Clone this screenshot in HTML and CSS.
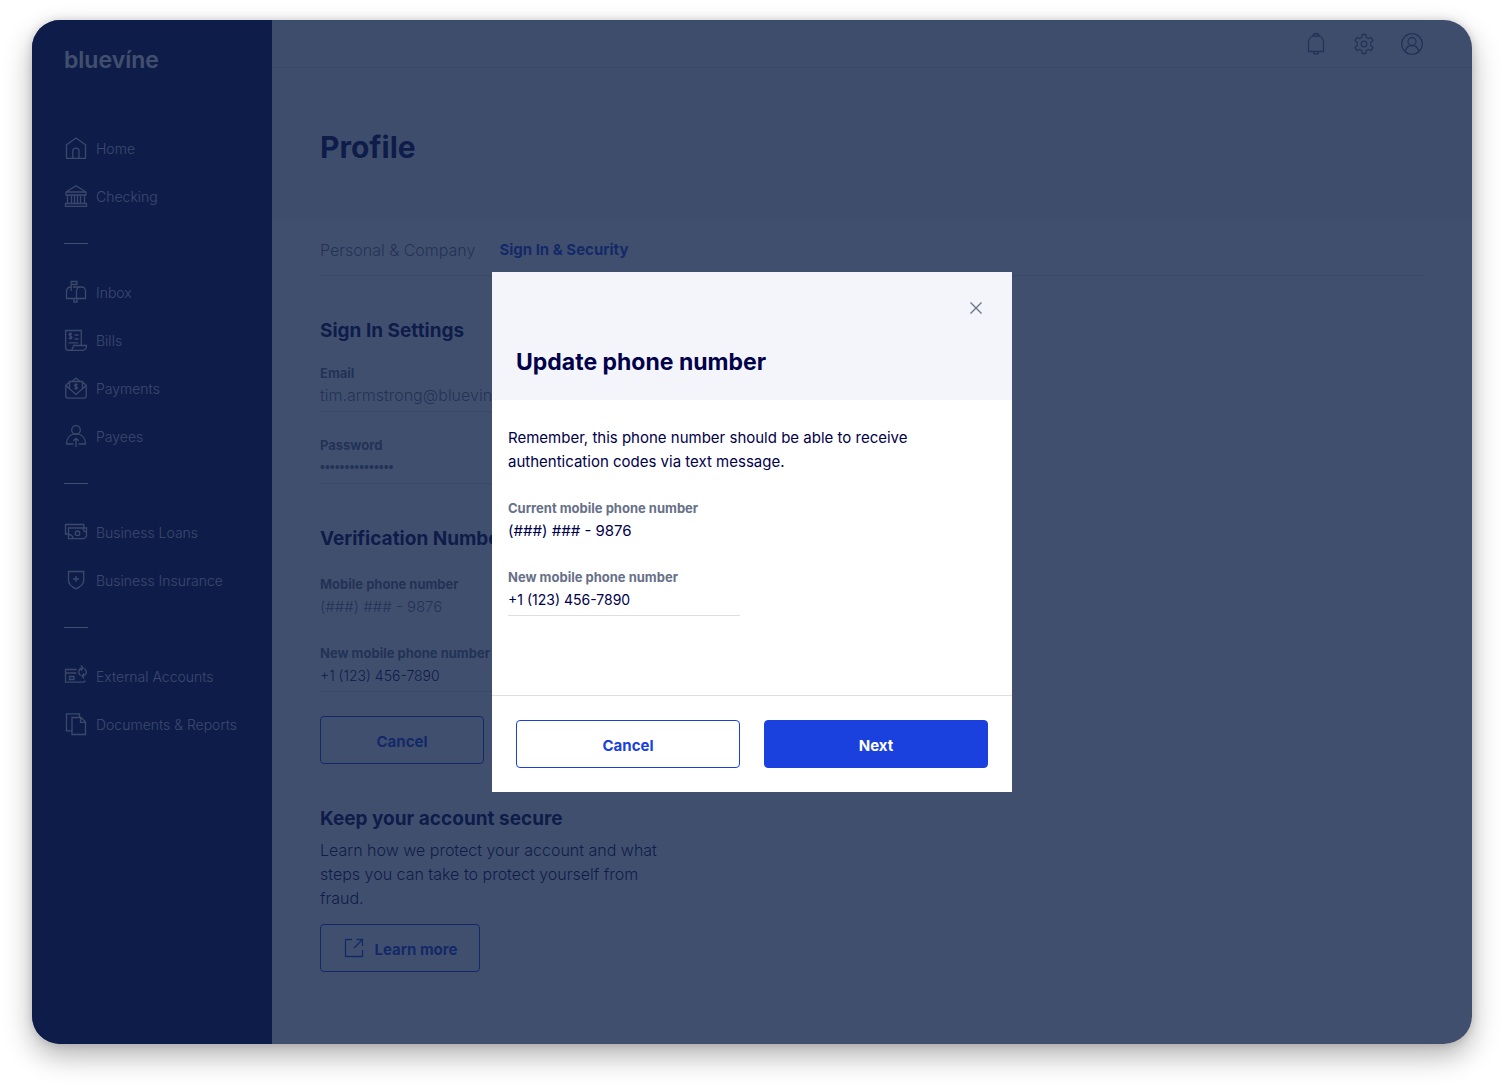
FILE: index.html
```
<!DOCTYPE html>
<html lang="en">
<head>
    <meta charset="UTF-8">
    <meta name="viewport" content="width=device-width, initial-scale=1.0">
    <title>Bluevine - Profile</title>
    <link rel="stylesheet" href="styles.css">
</head>
<body>
    <div class="window">
        <aside class="sidebar">
            <a class="logo" href="#">bluevíne</a>
            <nav class="nav">
                <a class="nav-item" href="#">
                    <svg class="icon" viewBox="0 0 24 24"><path d="M2.5 8.800 12 2l9.500 6.800V22.300h-19zM8.800 22V15.300a3.100 3.100 0 0 1 6.200 0V22"/></svg>
                    Home
                </a>
                <a class="nav-item" href="#">
                    <svg class="icon" viewBox="0 0 24 24"><path d="M2 8 12 1.800 22 8v3H2zM2 8h20M3.500 11v8.500M7.500 11v8.500M10.500 11v8.500M13.500 11v8.500M16.500 11v8.500M20.500 11v8.500M1.500 19.500h21v2.800h-21z"/></svg>
                    Checking
                </a>
                <hr class="nav-divider">
                <a class="nav-item" href="#">
                    <svg class="icon" viewBox="0 0 24 24"><path d="M7.200 11V1.500H13v3H7.200M7 7H6.500a4 4 0 0 0-4 4v7.500h19V11a4 4 0 0 0-4-4H9M12.500 18.500V11a4 4 0 0 1 4-4M10 18.500V22h3v-3.500"/></svg>
                    Inbox
                </a>
                <a class="nav-item" href="#">
                    <svg class="icon" viewBox="0 0 24 24"><path d="M17.300 17.500v-15H1.600v17a2.800 2.800 0 0 0 2.800 2.800H19q3.400-.5 3.500-4.800H9.500q-.5 4.800-4 4.800M4.500 14.800h9.800M10.500 7h4M10.500 11h4M8 6.200Q6.200 4.800 5 6.300c-.6 1.700 3 1.300 3 3.200-.5 1.500-2.200 1.300-3.300.2M6.500 4.500v7.300"/></svg>
                    Bills
                </a>
                <a class="nav-item" href="#">
                    <svg class="icon" viewBox="0 0 24 24"><path d="M5.500 6 1.800 9.200v10.500a2.500 2.500 0 0 0 2.500 2.500h15.400a2.500 2.500 0 0 0 2.500-2.500V9.200L18.500 6M5.500 13.500v-8h13v8M8 5.500 12 2l4 3.500M1.800 9.500 12 18.500l10.200-9M13.500 9.200q-1.500-1.300-2.700-.2c-.8 1.600 2.800 1.300 2.600 3-.5 1.300-2 1.100-3 .1M12 7.300v6.400"/></svg>
                    Payments
                </a>
                <a class="nav-item" href="#">
                    <svg class="icon" viewBox="0 0 24 24"><circle cx="12" cy="6" r="4.300"/><path d="M9.500 20h-7c0-5 2.500-8.500 6.500-10M14.500 20h7c0-5-2.500-8.500-6.500-10M9 10h6M12 23v-8.500M9.300 16.800l2.700-2.500 2.700 2.500"/></svg>
                    Payees
                </a>
                <hr class="nav-divider">
                <a class="nav-item" href="#">
                    <svg class="icon" viewBox="0 0 24 24"><path d="M4.500 14h-3V4.500h18.300V8M4.500 8h18v8.200l-2.500 2.500H4.500zM4.500 14.500q4 0 4.500 4M19 8q0 3.500 3.500 4"/><circle cx="13.500" cy="13.300" r="2.300"/></svg>
                    Business Loans
                </a>
                <a class="nav-item" href="#">
                    <svg class="icon" viewBox="0 0 24 24"><path d="M4.500 3.500h15.200V12c0 4-3 6.800-7.600 8.800C7.500 18.800 4.500 16 4.500 12zM12 8v6M9 11h6"/></svg>
                    Business Insurance
                </a>
                <hr class="nav-divider">
                <a class="nav-item" href="#">
                    <svg class="icon" viewBox="0 0 24 24"><path d="M12.500 5.500h-11v12.700h18.300l1.700-1.500M1.500 9h11M5.500 12.500H10v3H5.500zM16.500 11.500q-2-1.700-1.800-4Q15.200 4.500 18.500 4M17 1.500 19 4l-2 2.500M20.500 4.500q2 1.700 1.800 4-.5 3-3.800 3.500M20 9.500 18 12l2 2.500"/></svg>
                    External Accounts
                </a>
                <a class="nav-item" href="#">
                    <svg class="icon" viewBox="0 0 24 24"><path d="M8 18.800H2.500V1.800h13V5.500M8 5.500h9l4.500 4.500v12.500H8zM16.500 5.500V10.300h5"/></svg>
                    Documents &amp; Reports
                </a>
            </nav>
        </aside>

        <main class="main">
            <header class="topbar">
                <button class="icon-btn" type="button" aria-label="Notifications">
                    <svg class="icon" viewBox="0 0 24 24"><path d="M4.500 19.500V10q0-4 4.500-6h6q4.500 2 4.500 6v9.500zM9 4q0-2.500 3-2.500T15 4M9.500 19.500q0 2.700 2.500 2.700t2.500-2.700"/></svg>
                </button>
                <button class="icon-btn" type="button" aria-label="Settings">
                    <svg class="icon" viewBox="0 0 24 24"><circle cx="12" cy="12" r="2.800"/><path d="M10.200 2.500h3.600l.5 3 2 1.100 2.800-1.100 1.900 3.200-2.300 1.900v2.800l2.300 1.900-1.900 3.200-2.800-1.100-2 1.100-.5 3h-3.600l-.5-3-2-1.100-2.800 1.100L3 15.300l2.300-1.900v-2.800L3 8.700l1.900-3.200 2.800 1.100 2-1.100z"/></svg>
                </button>
                <button class="icon-btn" type="button" aria-label="Account">
                    <svg class="icon" viewBox="0 0 24 24"><circle cx="12" cy="12" r="10.300"/><circle cx="12" cy="9.500" r="4"/><path d="M5 19.500q1.500-6 7-6t7 6"/></svg>
                </button>
            </header>
            <div class="page-title">
                <h1>Profile</h1>
            </div>
            <div class="content">
                <nav class="tabs">
                    <a class="tab" href="#">Personal &amp; Company</a>
                    <a class="tab active" href="#">Sign In &amp; Security</a>
                </nav>

                <section class="section sign-in">
                    <h2>Sign In Settings</h2>
                    <div class="field">
                        <label for="email">Email</label>
                        <input class="muted" type="email" id="email" value="tim.armstrong@bluevine.com">
                    </div>
                    <div class="field">
                        <label for="password">Password</label>
                        <input class="muted" type="password" id="password" value="bluevinesecret1">
                    </div>
                </section>

                <section class="section verification">
                    <h2>Verification Number</h2>
                    <div class="field plain">
                        <label for="mobile">Mobile phone number</label>
                        <input class="muted" type="text" id="mobile" value="(###) ### - 9876" readonly>
                    </div>
                    <div class="field">
                        <label for="newMobile">New mobile phone number</label>
                        <input type="tel" id="newMobile" value="+1 (123) 456-7890">
                    </div>
                    <div class="section-buttons">
                        <button class="btn" type="button">Cancel</button>
                    </div>
                </section>

                <section class="section secure">
                    <h2>Keep your account secure</h2>
                    <p>Learn how we protect your account and what steps you can take to protect yourself from fraud.</p>
                    <button class="btn learn-btn" type="button">
                        <svg class="icon" viewBox="0 0 24 24"><path d="M9 3.500H2.500v17h17V14M13.500 3.500h6V10M19.500 3.500l-8.500 8.500"/></svg>
                        Learn more
                    </button>
                </section>
            </div>
        </main>

        <!-- Update phone modal -->
        <div class="overlay">
            <div class="modal" role="dialog" aria-labelledby="modalTitle">
                <div class="modal-header">
                    <button class="icon-btn close-btn" type="button" aria-label="Close">
                        <svg class="icon" viewBox="0 0 24 24"><path d="m6.500 6.500 11 11M17.500 6.500l-11 11"/></svg>
                    </button>
                    <h2 id="modalTitle">Update phone number</h2>
                </div>
                <div class="modal-body">
                    <p>Remember, this phone number should be able to receive authentication codes via text message.</p>
                    <div class="field plain">
                        <label for="currentPhone">Current mobile phone number</label>
                        <input type="text" id="currentPhone" value="(###) ### - 9876" readonly>
                    </div>
                    <div class="field">
                        <label for="newPhone">New mobile phone number</label>
                        <input type="tel" id="newPhone" value="+1 (123) 456-7890">
                    </div>
                </div>
                <div class="modal-footer">
                    <button class="btn" type="button">Cancel</button>
                    <button class="btn primary" type="button">Next</button>
                </div>
            </div>
        </div>
    </div>
</body>
</html>
```

FILE: styles.css
```
* {
    box-sizing: border-box;
}

body {
    margin: 0;
    padding: 20px 32px 44px;
    background-color: #ffffff;
    color: #00004b;
    font-family: Inter, "Liberation Sans", sans-serif;
    font-size: 16px;
    font-weight: 300;
    line-height: 24px;
}

h1, h2, p {
    margin: 0;
}

a {
    text-decoration: none;
}

.window {
    position: relative;
    display: flex;
    min-height: calc(100vh - 64px);
    border-radius: 28px;
    overflow: hidden;
    background-color: #ffffff;
    box-shadow: 0 12px 28px rgba(0, 0, 0, 0.3), 0 0 8px rgba(0, 0, 0, 0.15);
}

.icon {
    display: block;
    flex: none;
    width: 24px;
    height: 24px;
    fill: none;
    stroke: currentColor;
    stroke-width: 1.3;
}

.icon-btn {
    padding: 0;
    border: none;
    background: none;
    color: #677089;
    cursor: pointer;
}

/* Sidebar */
.sidebar {
    flex: none;
    width: 240px;
    padding: 24px 0 32px 32px;
    background-color: #00004b;
}

.logo {
    display: block;
    color: #ffffff;
    font-size: 23px;
    font-weight: 600;
    line-height: 32px;
}

.nav {
    display: flex;
    flex-direction: column;
    margin-top: 48px;
}

.nav-item {
    display: flex;
    align-items: center;
    gap: 8px;
    height: 48px;
    padding-top: 2px;
    color: #d9dce8;
    font-size: 14px;
}

.nav-item .icon {
    margin-bottom: 2px;
}

.nav-divider {
    width: 24px;
    height: 1px;
    margin: 23px 0 24px;
    border: none;
    background-color: #ffffff;
}

/* Main */
.main {
    flex: 1;
    min-width: 0;
}

.topbar {
    display: flex;
    justify-content: flex-end;
    align-items: center;
    gap: 24px;
    height: 48px;
    padding: 0 48px;
    background-color: #f4f5fa;
    border-bottom: 1px solid #dcdee9;
}

.page-title {
    padding: 59px 48px 53px;
    background-color: #f4f5fa;
}

.page-title h1 {
    font-size: 30px;
    font-weight: 700;
    line-height: 40px;
}

.content {
    padding: 0 48px 48px;
}

.tabs {
    display: flex;
    gap: 24px;
    height: 56px;
    padding-top: 18px;
    border-bottom: 1px solid #dcdee9;
}

.tab {
    color: #677089;
}

.tab.active {
    color: #1a41dd;
    font-size: 15px;
    font-weight: 700;
}

.section {
    width: 344px;
}

.section h2 {
    font-size: 19px;
    font-weight: 700;
    line-height: 28px;
}

.sign-in {
    padding-top: 41px;
}

.sign-in h2 {
    margin-bottom: 18px;
}

.verification {
    padding-top: 18px;
}

.verification h2 {
    margin-bottom: 21px;
}

.section-buttons {
    display: grid;
    grid-template-columns: 1fr 1fr;
    gap: 16px;
}

.secure {
    padding-top: 41px;
}

.secure h2 {
    margin-bottom: 5px;
}

.secure p {
    margin-bottom: 14px;
}

/* Form fields */
.field {
    display: flex;
    flex-direction: column;
    margin-bottom: 23px;
    border-bottom: 1px solid #dcdee9;
}

.field.plain {
    border-bottom: none;
}

.field.plain,
.verification .field {
    margin-bottom: 24px;
}

.field label {
    color: #677089;
    font-size: 13px;
    font-weight: 700;
    line-height: 20px;
}

.field input {
    width: 100%;
    height: 28px;
    padding: 0 0 4px;
    border: none;
    outline: none;
    background: none;
    color: #00004b;
    font: inherit;
}

.field.plain input {
    height: 25px;
    padding: 0 0 1px;
    font-size: 15px;
}

.field input[type="tel"] {
    font-size: 14px;
}

.field input[type="password"] {
    font-family: "Liberation Sans", sans-serif;
    font-size: 14px;
}

.field input.muted {
    color: #677089;
}

/* Buttons */
.btn {
    height: 48px;
    padding: 3px 0 0;
    border: 1px solid #1a41dd;
    border-radius: 4px;
    background-color: transparent;
    color: #1a41dd;
    font: inherit;
    font-size: 15px;
    font-weight: 700;
    cursor: pointer;
}

.btn.primary {
    background-color: #1a41dd;
    color: #ffffff;
}

.learn-btn {
    display: flex;
    justify-content: center;
    align-items: center;
    gap: 8px;
    width: 160px;
}

.learn-btn .icon {
    margin-bottom: 3px;
}

/* Modal */
.overlay {
    position: absolute;
    inset: 0;
    display: flex;
    justify-content: center;
    align-items: center;
    background-color: rgba(18, 35, 74, 0.8);
}

.modal {
    display: flex;
    flex-direction: column;
    width: 520px;
    min-height: 520px;
    background-color: #ffffff;
}

.modal-header {
    display: flex;
    flex-direction: column;
    gap: 26px;
    padding: 24px 24px 22px;
    background-color: #f4f5fa;
}

.close-btn {
    align-self: flex-end;
}

.modal-header h2 {
    font-size: 23px;
    font-weight: 700;
    line-height: 32px;
}

.modal-body {
    flex: 1;
    padding: 26px 16px 0;
    font-size: 15px;
    font-weight: 400;
}

.modal-body p {
    max-width: 424px;
    margin-bottom: 24px;
}

.modal-body .field {
    width: 232px;
}

.modal-footer {
    display: grid;
    grid-template-columns: 1fr 1fr;
    gap: 24px;
    padding: 24px;
    border-top: 1px solid #dcdee9;
}
```
